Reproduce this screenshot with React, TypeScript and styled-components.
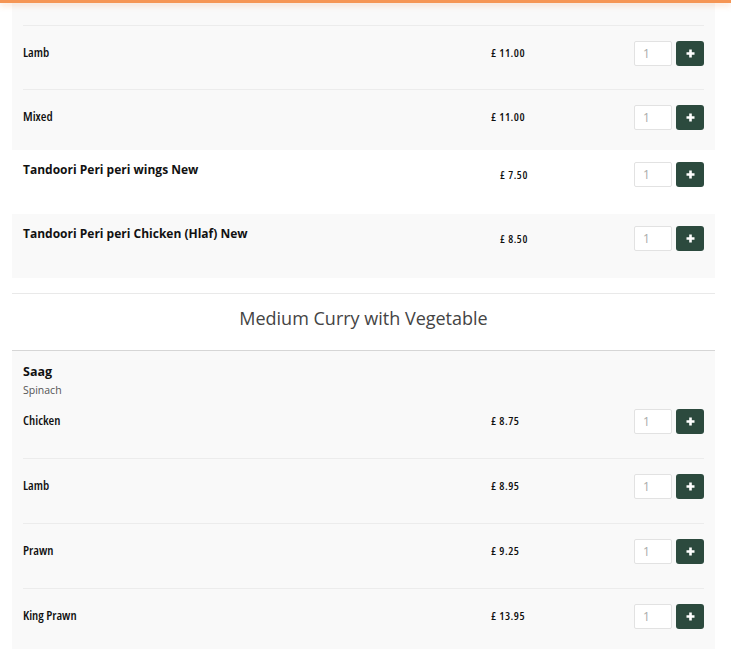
import React from "react"
import styled, { createGlobalStyle, css } from "styled-components"

const GlobalStyle = createGlobalStyle`
    html, body {
        margin: 0;
        padding: 0;
        background: #ffffff;
        font-family: "Open Sans", "Liberation Sans", sans-serif;
        color: #222;
    }
`;

const TopBar = styled.div`
    position: fixed;
    top: 0;
    left: 0;
    right: 0;
    height: 3px;
    background: rgba(244, 134, 60, 0.88);
    box-shadow: 0 2px 6px rgba(244, 140, 70, 0.35);
    z-index: 10;
`;

const Menu = styled.div`
    padding: 0 16px 8px 12px;
`;

const Variant = styled.div`
    display: flex;
    align-items: center;
    padding: 15px 0 24px;
    border-top: 1px solid #ececec;

    &:first-of-type {
        border-top: none;
        padding-top: 10px;
    }
    &:last-child {
        padding-bottom: 20px;
    }
`;

const Item = styled.div<{ $alt?: boolean; $continued?: boolean }>`
    background: ${(props) => (props.$alt ? "#ffffff" : "#f9f9f9")};
    padding: 12px 11px 0;

    ${(props) => props.$continued && css`
        padding-top: 25px;
        ${Variant}:first-of-type {
            border-top: 1px solid #ececec;
            padding-top: 15px;
            padding-bottom: 23px;
        }
    `}
`;

const SingleItem = styled(Item)`
    display: flex;
    align-items: flex-start;
    padding: 12px 11px 27px;
`;

const ItemTitle = styled.h4`
    margin: 0;
    font-size: 12.5px;
    line-height: 18px;
    font-weight: 700;
    color: #111;
`;

const SingleTitle = styled(ItemTitle)`
    flex: 1;
    font-size: 12px;
    line-height: 16px;
`;

const ItemDesc = styled.p`
    margin: 0;
    font-size: 10.5px;
    line-height: 18px;
    color: #555;
`;

const VariantName = styled.div`
    flex: 1;
    font-size: 13px;
    font-weight: 600;
    font-stretch: 80%;
    color: #111;
    margin-top: -3px;
`;

const Price = styled.div<{ $shift?: number }>`
    width: ${(props) => 143 - (props.$shift || 0)}px;
    padding-left: ${(props) => props.$shift || 0}px;
    font-size: 11.5px;
    font-weight: 600;
    font-stretch: 80%;
    letter-spacing: 0.5px;
    color: #111;
    margin-top: -3px;
`;

const SinglePrice = styled(Price)`
    margin-top: 5px;
    font-size: 11px;
    letter-spacing: 0.6px;
`;

const Controls = styled.div`
    display: flex;
    gap: 4px;
`;

const Qty = styled.input`
    box-sizing: border-box;
    width: 38px;
    height: 25px;
    border: 1px solid #e2e2e2;
    border-radius: 2px;
    background: #fff;
    padding: 0 0 0 8px;
    font-family: "Open Sans", sans-serif;
    font-size: 12px;
    font-weight: 400;
    color: #aaaaaa;
    outline: none;
`;

const AddButton = styled.button`
    width: 28px;
    height: 25px;
    border: none;
    border-radius: 3px;
    background: #2c4a3e;
    display: flex;
    align-items: center;
    justify-content: center;
    padding: 0;
    cursor: pointer;
`;

const SectionHeader = styled.h3`
    margin: 15px 0 0;
    padding: 12px 0 20px;
    border-top: 1px solid #e9e9e9;
    border-bottom: 1px solid #d6d6d6;
    text-align: center;
    font-size: 18px;
    line-height: 24px;
    font-weight: 400;
    color: #444;
`;

const Plus = () => (
    <svg width="9" height="9" viewBox="0 0 9 9">
        <path d="M4.5 0.5v8M0.5 4.5h8" stroke="#fff" strokeWidth="2.6" />
    </svg>
);

const AddControls = () => (
    <Controls>
        <Qty defaultValue="1" />
        <AddButton><Plus /></AddButton>
    </Controls>
);

type MenuVariant = { name: string; price: string };

const VariantItem: React.FC<{ title?: string; desc?: string; variants: MenuVariant[] }> = ({ title, desc, variants }) => (
    <Item $continued={!title}>
        {title && <ItemTitle>{title}</ItemTitle>}
        {desc && <ItemDesc>{desc}</ItemDesc>}
        {variants.map((v) => (
            <Variant key={v.name}>
                <VariantName>{v.name}</VariantName>
                <Price>£ {v.price}</Price>
                <AddControls />
            </Variant>
        ))}
    </Item>
);

const PlainItem: React.FC<{ title: string; price: string; alt?: boolean }> = ({ title, price, alt }) => (
    <SingleItem $alt={alt}>
        <SingleTitle>{title}</SingleTitle>
        <SinglePrice $shift={9}>£ {price}</SinglePrice>
        <AddControls />
    </SingleItem>
);

const App: React.FC = () => {
    return (
        <>
            <GlobalStyle />
            <TopBar />
            <Menu>
                {/* rest of the grill list, scrolled past its first row */}
                <VariantItem
                    variants={[
                        { name: "Lamb", price: "11.00" },
                        { name: "Mixed", price: "11.00" },
                    ]}
                />
                <PlainItem title="Tandoori Peri peri wings New" price="7.50" alt />
                <PlainItem title="Tandoori Peri peri Chicken (Hlaf) New" price="8.50" />

                <SectionHeader>Medium Curry with Vegetable</SectionHeader>
                <VariantItem
                    title="Saag"
                    desc="Spinach"
                    variants={[
                        { name: "Chicken", price: "8.75" },
                        { name: "Lamb", price: "8.95" },
                        { name: "Prawn", price: "9.25" },
                        { name: "King Prawn", price: "13.95" },
                    ]}
                />
            </Menu>
        </>
    )
}

export default App;
